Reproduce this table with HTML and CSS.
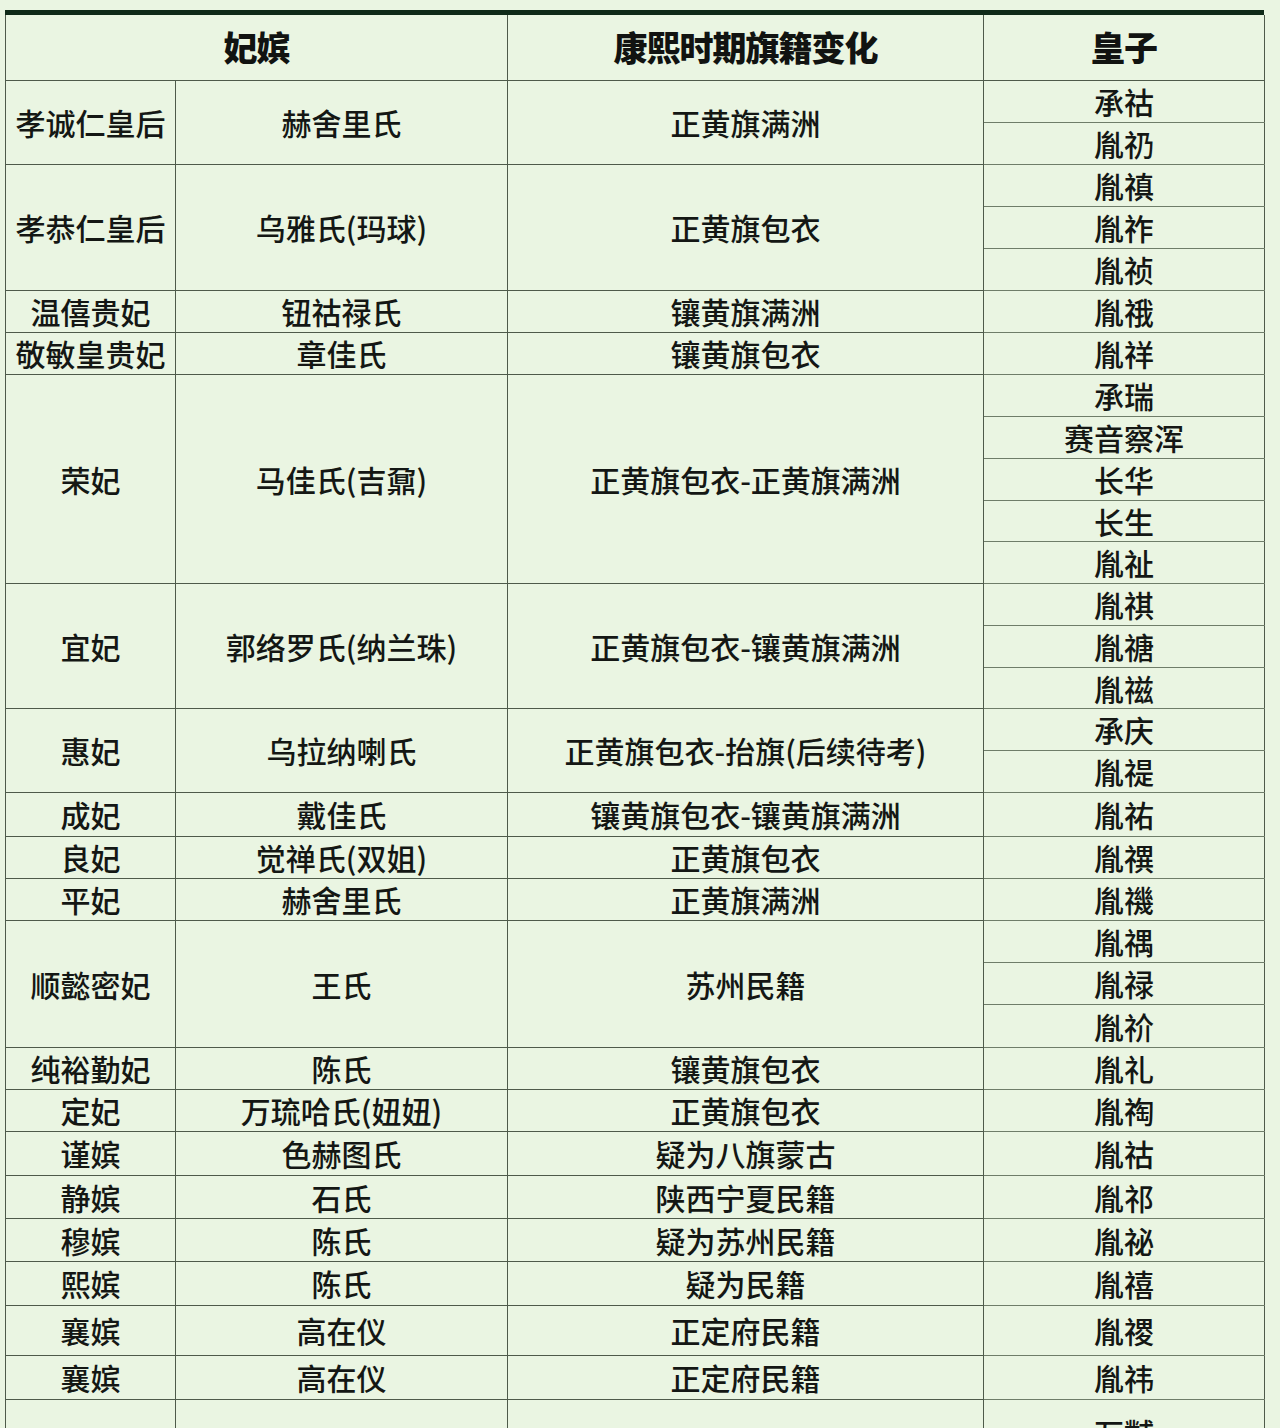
FILE: index.html
```html
<!DOCTYPE html>
<html lang="zh-CN">
<head>
<meta charset="utf-8">
<title>康熙妃嫔旗籍</title>
<link rel="stylesheet" href="styles.css">
</head>
<body>
<div class="sheet">
  <div class="topbar"></div>
  <table class="grid">
    <colgroup>
      <col class="c1"><col class="c2"><col class="c3"><col class="c4">
    </colgroup>
    <thead>
      <tr class="head">
        <th colspan="2">妃嫔</th>
        <th>康熙时期旗籍变化</th>
        <th>皇子</th>
      </tr>
    </thead>
    <tbody>
      <tr><td rowspan="2">孝诚仁皇后</td><td rowspan="2">赫舍里氏</td><td rowspan="2">正黄旗满洲</td><td class="son">承祜</td></tr>
      <tr><td class="son">胤礽</td></tr>

      <tr><td rowspan="3">孝恭仁皇后</td><td rowspan="3">乌雅氏(玛球)</td><td rowspan="3">正黄旗包衣</td><td class="son">胤禛</td></tr>
      <tr><td class="son">胤祚</td></tr>
      <tr><td class="son">胤祯</td></tr>

      <tr><td>温僖贵妃</td><td>钮祜禄氏</td><td>镶黄旗满洲</td><td class="son">胤䄉</td></tr>
      <tr><td>敬敏皇贵妃</td><td>章佳氏</td><td>镶黄旗包衣</td><td class="son">胤祥</td></tr>

      <tr><td rowspan="5">荣妃</td><td rowspan="5">马佳氏(吉鼐)</td><td rowspan="5">正黄旗包衣-正黄旗满洲</td><td class="son">承瑞</td></tr>
      <tr><td class="son">赛音察浑</td></tr>
      <tr><td class="son">长华</td></tr>
      <tr class="h41"><td class="son">长生</td></tr>
      <tr><td class="son">胤祉</td></tr>

      <tr><td rowspan="3">宜妃</td><td rowspan="3">郭络罗氏(纳兰珠)</td><td rowspan="3">正黄旗包衣-镶黄旗满洲</td><td class="son">胤祺</td></tr>
      <tr><td class="son">胤禟</td></tr>
      <tr class="h41"><td class="son">胤禌</td></tr>

      <tr><td rowspan="2">惠妃</td><td rowspan="2">乌拉纳喇氏</td><td rowspan="2">正黄旗包衣-抬旗(后续待考)</td><td class="son">承庆</td></tr>
      <tr><td class="son">胤禔</td></tr>

      <tr class="h44"><td>成妃</td><td>戴佳氏</td><td>镶黄旗包衣-镶黄旗满洲</td><td class="son">胤祐</td></tr>
      <tr><td>良妃</td><td>觉禅氏(双姐)</td><td>正黄旗包衣</td><td class="son">胤禩</td></tr>
      <tr><td>平妃</td><td>赫舍里氏</td><td>正黄旗满洲</td><td class="son">胤禨</td></tr>

      <tr><td rowspan="3">顺懿密妃</td><td rowspan="3">王氏</td><td rowspan="3">苏州民籍</td><td class="son">胤禑</td></tr>
      <tr><td class="son">胤禄</td></tr>
      <tr class="h43"><td class="son">胤祄</td></tr>

      <tr><td>纯裕勤妃</td><td>陈氏</td><td>镶黄旗包衣</td><td class="son">胤礼</td></tr>
      <tr><td>定妃</td><td>万琉哈氏(妞妞)</td><td>正黄旗包衣</td><td class="son">胤祹</td></tr>
      <tr class="h44"><td>谨嫔</td><td>色赫图氏</td><td>疑为八旗蒙古</td><td class="son">胤祜</td></tr>
      <tr class="h43"><td>静嫔</td><td>石氏</td><td>陕西宁夏民籍</td><td class="son">胤祁</td></tr>
      <tr class="h43"><td>穆嫔</td><td>陈氏</td><td>疑为苏州民籍</td><td class="son">胤祕</td></tr>
      <tr class="h44"><td>熙嫔</td><td>陈氏</td><td>疑为民籍</td><td class="son">胤禧</td></tr>
      <tr class="h50"><td>襄嫔</td><td>高在仪</td><td>正定府民籍</td><td class="son">胤禝</td></tr>
      <tr class="h44"><td>襄嫔</td><td>高在仪</td><td>正定府民籍</td><td class="son">胤祎</td></tr>

      <tr class="h50"><td></td><td></td><td></td><td class="son last">万黼</td></tr>
    </tbody>
  </table>
</div>
</body>
</html>
```

FILE: styles.css
```css
html, body {
  margin: 0;
  padding: 0;
  background: #eaf5e2;
}

body {
  height: 1428px;
  overflow: hidden;
  font-family: "Noto Sans CJK SC", "Noto Sans", sans-serif;
  color: #141714;
}

.sheet {
  padding: 10px 0 0 5px;
  width: 1259px;
}

.topbar {
  height: 5px;
  background: #0f2a18;
}

.grid {
  width: 1259px;
  table-layout: fixed;
  border-collapse: collapse;
  background: #eaf5e2;
}

.c1 { width: 170px; }
.c2 { width: 332px; }
.c3 { width: 476px; }
.c4 { width: 281px; }

.grid th,
.grid td {
  border: 1px solid #4e5a4a;
  padding: 0;
  text-align: center;
  vertical-align: middle;
  white-space: nowrap;
}

.grid thead th {
  border-top: none;
}

.head {
  height: 65px;
}

.head th {
  font-size: 34px;
  font-weight: 900;
  letter-spacing: -1px;
  line-height: 40px;
  color: #111311;
}

.grid td {
  font-size: 30px;
  font-weight: 500;
  line-height: 34px;
}

.grid tbody tr {
  height: 42px;
}

.grid tbody tr.h41 { height: 41px; }
.grid tbody tr.h43 { height: 43px; }
.grid tbody tr.h44 { height: 44px; }
.grid tbody tr.h50 { height: 50px; }

.grid td.son {
  border-top-color: #6f7d69;
  border-bottom-color: #6f7d69;
}

.grid td.last {
  vertical-align: bottom;
}
```
